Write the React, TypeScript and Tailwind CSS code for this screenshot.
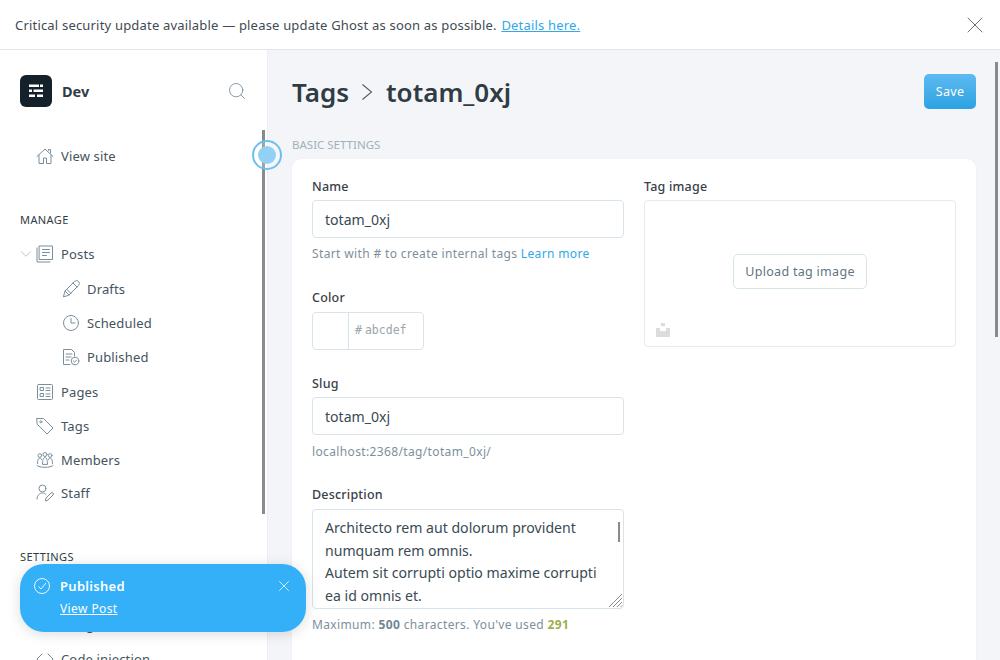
import React from 'react'
import { X, Search, ChevronDown } from 'lucide-react'

const ic = { width: 18, height: 18, viewBox: '0 0 18 18', fill: 'none', stroke: '#7b8f9b', strokeWidth: 1, strokeLinecap: 'round' as const, strokeLinejoin: 'round' as const }

const HomeIcon = () => (
  <svg {...ic}>
    <path d="M1 9.500 9 2l8 7.500M3 8v8.500h4.500V11h3v5.500H15V8M12.500 3.500V2.500H14.500V6" />
  </svg>
)
const PostsIcon = () => (
  <svg {...ic}>
    <path d="M3.500 1h13v13.500h-13zM1 3v14h13" />
    <path d="M6.500 4.500h7M6.500 7.500h7M6.500 10.500h4" />
  </svg>
)
const PencilIcon = () => (
  <svg {...ic}>
    <path d="M1.500 16.500 3 11 12.500 1.500a2 2 0 0 1 4 4L7 15zM3 11l4 4M11 3l4 4M5 9.500l4 4" />
  </svg>
)
const ClockIcon = () => (
  <svg {...ic}>
    <circle cx="9" cy="9" r="7.500" />
    <path d="M9 4.500V9h4" />
  </svg>
)
const PublishedIcon = () => (
  <svg {...ic}>
    <path d="M8 16.500H1.500v-15h8l3 3V8" />
    <path d="M4 6h6M4 9h5M4 12h3" />
    <circle cx="13" cy="13" r="3.800" />
    <path d="m11.300 13 1.200 1.200 2-2.200" />
  </svg>
)
const PagesIcon = () => (
  <svg {...ic}>
    <rect x="1.500" y="1.500" width="15" height="15" rx="1" />
    <path d="M4.500 4.500h3v3h-3zM4.500 10.500h3v3h-3zM10 5h4M10 7.500h4M10 11h4M10 13.500h4" />
  </svg>
)
const TagIcon = () => (
  <svg {...ic}>
    <path d="M1 1.500h6.500L17 11l-6 6-9.500-9.500z" />
    <circle cx="4.800" cy="4.800" r="1" />
  </svg>
)
const MembersIcon = () => (
  <svg {...ic}>
    <circle cx="9" cy="3.500" r="2" />
    <circle cx="3.800" cy="4.500" r="1.800" />
    <circle cx="14.200" cy="4.500" r="1.800" />
    <path d="M6.500 13c0-4 1-6.500 2.500-6.500s2.500 2.500 2.500 6.500zM1.500 12.500c0-3.500 1-5.500 2.300-5.500.8 0 1.300.5 1.700 1.500M16.500 12.500c0-3.500-1-5.500-2.300-5.500-.8 0-1.300.5-1.700 1.500M1 14.500c2 2.500 14 2.500 16 0" />
  </svg>
)
const StaffIcon = () => (
  <svg {...ic}>
    <circle cx="6.500" cy="4.500" r="3.500" />
    <path d="M1 15c0-3.500 2.500-6 5.500-6 1.500 0 2.500.5 3.500 1.500M9.500 16.500l.5-2.500 5-5a1.400 1.400 0 0 1 2 2l-5 5z" />
  </svg>
)
const CodeIcon = () => (
  <svg {...ic}>
    <path d="M6 4 1 9l5 5M12 4l5 5-5 5" />
  </svg>
)

const NavItem = ({ icon, label, className = '' }: { icon?: React.ReactNode; label: string; className?: string }) => (
  <div className={`flex h-[34px] items-center gap-[7px] pl-[36px] text-[13px] tracking-[0.15px] text-[#44545e] ${className}`}>
    <span className="flex w-[18px] justify-center">{icon}</span>
    <span className="pt-[2px]">{label}</span>
  </div>
)

const SubItem = ({ icon, label }: { icon: React.ReactNode; label: string }) => (
  <div className="flex h-[34px] items-center gap-[7px] pl-[62px] text-[13px] tracking-[0.15px] text-[#44545e]">
    {icon}
    <span className="pt-[2px]">{label}</span>
  </div>
)

const Label = ({ children, className = 'mb-[5px]' }: { children: React.ReactNode; className?: string }) => (
  <div className={`h-[18px] pt-px text-[12.500px] leading-[18px] font-medium tracking-[0.2px] text-[#394047] ${className}`}>{children}</div>
)

const Hint = ({ children, className = 'mt-[7px]' }: { children: React.ReactNode; className?: string }) => (
  <div className={`h-[18px] text-[12px] leading-[18px] tracking-[0.36px] text-[#7d8f9b] ${className}`}>{children}</div>
)

const Field = ({ value }: { value: string }) => (
  <input
    readOnly
    defaultValue={value}
    className="h-[38px] w-full rounded-[4px] border border-[#d8e4ec] bg-white px-3 text-[14.100px] text-[#394a54] outline-none"
  />
)

export default function App() {
  return (
    <div className="relative flex h-[660px] w-[1000px] flex-col overflow-hidden bg-white font-['Noto_Sans',sans-serif]">
      <div className="flex h-[50px] shrink-0 items-center justify-between border-b border-[#e2e4e6] bg-white pr-[11px] pl-[15px] text-[13px] tracking-[0.19px] text-[#3f4b53]">
        <div className="pt-[2px]">
          Critical security update available — please update Ghost as soon as possible.{' '}
          <span className="ml-px text-[#30a8ea] underline">Details here.</span>
        </div>
        <X size={28} strokeWidth={0.7} color="#4a5560" />
      </div>

      <div className="flex min-h-0 flex-1">
        <aside className="w-[268px] shrink-0 overflow-hidden border-r border-[#eceef1] bg-white">
          <div className="flex items-center justify-between pt-[25px] pr-[20px] pl-[20px]">
            <div className="flex items-center gap-[10px]">
              <div className="flex h-8 w-8 items-center justify-center rounded-[6px] bg-[#15212a]">
                <svg width="16" height="14" viewBox="0 0 16 14" fill="#fff">
                  <rect x="1" y="0.500" width="10" height="2.500" />
                  <rect x="12" y="0.500" width="3" height="2.500" />
                  <rect x="1" y="5.500" width="3" height="2.500" />
                  <rect x="5.500" y="5.500" width="9.500" height="2.500" />
                  <rect x="1" y="10.500" width="6" height="2.500" />
                  <rect x="9" y="10.500" width="6" height="2.500" />
                </svg>
              </div>
              <span className="pt-px text-[14.500px] font-bold text-[#2f3c44]">Dev</span>
            </div>
            <Search size={20} strokeWidth={1} color="#6d8796" />
          </div>

          <div className="mt-[32px]">
            <NavItem icon={<HomeIcon />} label="View site" />
          </div>

          <div className="mt-[39px] mb-[9px] pl-5 text-[11px] leading-[16px] tracking-[0.4px] text-[#2f3c44]">MANAGE</div>
          <div className="relative">
            <ChevronDown size={18} strokeWidth={0.9} color="#9aabb5" className="absolute top-[8px] left-[17px]" />
            <NavItem icon={<PostsIcon />} label="Posts" />
          </div>
          <div className="my-px">
            <SubItem icon={<PencilIcon />} label="Drafts" />
            <SubItem icon={<ClockIcon />} label="Scheduled" />
            <SubItem icon={<PublishedIcon />} label="Published" />
          </div>
          <NavItem icon={<PagesIcon />} label="Pages" />
          <NavItem icon={<TagIcon />} label="Tags" />
          <NavItem icon={<MembersIcon />} label="Members" />
          <NavItem icon={<StaffIcon />} label="Staff" className="-mt-px" />

          <div className="mt-[39px] mb-[9px] pl-5 text-[11px] leading-[16px] tracking-[0.4px] text-[#2f3c44]">SETTINGS</div>
          <NavItem label="General" />
          <NavItem label="Integrations" />
          <NavItem icon={<CodeIcon />} label="Code injection" />
        </aside>

        <main className="min-w-0 flex-1 overflow-hidden bg-[#f4f5f8] pr-[24px] pl-[24px]">
          <div className="flex items-start justify-between pt-[24px]">
            <div className="flex h-[36px] items-center text-[26px] font-semibold text-[#2f3c44]">
              Tags
              <svg width="12" height="18" viewBox="0 0 12 18" fill="none" stroke="#4f5f69" strokeWidth="1.100" className="mr-[13px] ml-[12px]">
                <path d="m1.500 1.500 9 7.500-9 7.500" />
              </svg>
              totam_0xj
            </div>
            <button className="h-[35px] w-[52px] rounded-[5px] bg-gradient-to-b from-[#5cbaf1] to-[#2ba2e3] pt-[2px] text-[12.500px] tracking-[0.3px] text-white">
              Save
            </button>
          </div>

          <div className="mt-[26px] h-[18px] text-[11.500px] leading-[18px] text-[#9fb1bb]">BASIC SETTINGS</div>

          <div className="mt-[5px] flex gap-5 rounded-t-[9px] bg-white p-5 pt-[18px] shadow-[0_0_1px_rgba(0,0,0,0.1)]">
            <div className="flex w-[312px] shrink-0 flex-col">
              <Label>Name</Label>
              <Field value="totam_0xj" />
              <Hint>
                Start with # to create internal tags <span className="text-[#30a8ea]">Learn more</span>
              </Hint>

              <Label className="mt-[25px] mb-[6px]">Color</Label>
              <div className="flex h-[38px] w-[112px] rounded-[4px] border border-[#d8e4ec] bg-white">
                <div className="w-[36px] border-r border-[#d8e4ec]" />
                <div className="flex items-center gap-[3px] pl-[6px] font-['DejaVu_Sans_Mono',monospace] text-[11.500px] text-[#9aa5ac]">
                  <span>#</span>
                  <span>abcdef</span>
                </div>
              </div>

              <Label className="mt-[24px] mb-[5px]">Slug</Label>
              <Field value="totam_0xj" />
              <Hint className="mt-[8px]">localhost:2368/tag/totam_0xj/</Hint>

              <Label className="mt-[24px] mb-[6px]">Description</Label>
              <div className="relative">
                <textarea
                  readOnly
                  defaultValue={'Architecto rem aut dolorum provident numquam rem omnis.\nAutem sit corrupti optio maxime corrupti ea id omnis et.'}
                  className="block h-[100px] w-full resize-none overflow-hidden rounded-[4px] border border-[#d8e4ec] bg-white px-3 py-[7px] text-[14.100px] leading-[22.500px] text-[#394a54] outline-none"
                />
                <div className="absolute top-[13px] right-[4px] h-[20px] w-[2px] bg-[#8a8a8a]" />
                <svg width="15" height="15" viewBox="0 0 15 15" stroke="#8a8a8a" strokeWidth="1" className="absolute right-[1px] bottom-[1px]">
                  <path d="M1 14 14 1M5 14l9-9M9 14l5-5M12.500 14l1.500-1.500" />
                </svg>
              </div>
              <Hint>
                Maximum: <b className="font-bold text-[#6f8695]">500</b> characters. You've used <b className="font-bold text-[#9cb04f]">291</b>
              </Hint>
              <div className="h-10" />
            </div>

            <div className="flex w-[312px] shrink-0 flex-col">
              <Label>Tag image</Label>
              <div className="relative flex h-[147px] items-center justify-center rounded-[4px] border border-[#e4ecf2] bg-white pb-[4px]">
                <button className="h-[35px] w-[134px] rounded-[5px] border border-[#d8e4ec] bg-white pt-[2px] text-[12.500px] tracking-[0.3px] text-[#5f7583]">
                  Upload tag image
                </button>
                <svg width="14" height="14" viewBox="0 0 14 14" className="absolute bottom-[9px] left-[11px]" fill="#dcdcdc">
                  <path d="M5 0h4v3H5zM0 5h4v3h6V5h4v9H0z" />
                </svg>
              </div>
            </div>
          </div>
        </main>
      </div>

      {/* overlay scrollbars */}
      <div className="absolute top-[130px] left-[262px] h-[384px] w-[3px] bg-[#8a8a8a]" />
      <div className="absolute top-[62px] left-[995px] h-[275px] w-[3px] bg-[#8a8a8a]" />

      {/* hotspot */}
      <div className="absolute top-[140px] left-[252px] flex h-[30px] w-[30px] items-center justify-center rounded-full border-[2px] border-[#6cc0f2] bg-white/20">
        <div className="h-[18px] w-[18px] rounded-full bg-[#93d0f5]" />
      </div>

      {/* toast */}
      <div className="absolute top-[564px] left-[20px] flex h-[68px] w-[286px] items-start rounded-[24px] bg-[#33b0f8] pt-[12px] pr-[13px] pl-[14px] text-white shadow-[0_2px_14px_rgba(0,0,0,0.14)]">
        <svg width="16" height="16" viewBox="0 0 16 16" fill="none" stroke="#fff" strokeWidth="0.9" className="mt-[2px]">
          <circle cx="8" cy="8" r="7.500" />
          <path d="m4.500 8.500 2.500 2.500 5-6" />
        </svg>
        <div className="ml-[10px] flex-1">
          <div className="text-[13px] leading-[20px] font-semibold tracking-[0.3px]">Published</div>
          <div className="mt-[4px] text-[12px] leading-[18px] tracking-[0.4px] underline">View Post</div>
        </div>
        <X size={18} strokeWidth={1} color="#fff" className="mt-px" />
      </div>
    </div>
  )
}
